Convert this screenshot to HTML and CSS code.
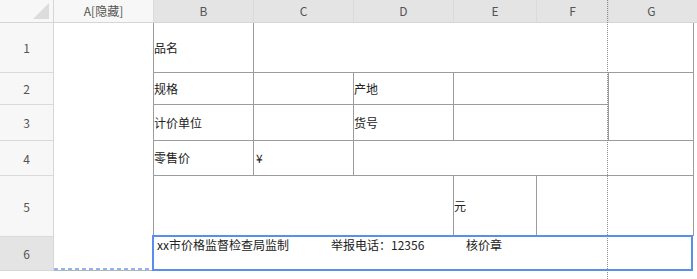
FILE: index.html
```html
<!DOCTYPE html>
<html lang="zh-CN">
<head>
  <meta charset="UTF-8">
  <title>价格标签模板</title>
  <link rel="stylesheet" href="styles.css">
</head>
<body>
  <div class="sheet">
    <!-- column headers -->
    <div class="corner">
      <svg width="16" height="16" viewBox="0 0 16 16"><polygon points="16,0 16,16 0,16" fill="#dcdcdc"/></svg>
    </div>
    <div class="col-head h-a">A[隐藏]</div>
    <div class="col-head sel h-b">B</div>
    <div class="col-head sel h-c">C</div>
    <div class="col-head sel h-d">D</div>
    <div class="col-head sel h-e">E</div>
    <div class="col-head sel h-f">F</div>
    <div class="col-head sel h-g">G</div>
    <div class="col-head sel h-x"></div>

    <!-- row headers -->
    <div class="row-head n1">1</div>
    <div class="row-head n2">2</div>
    <div class="row-head n3">3</div>
    <div class="row-head n4">4</div>
    <div class="row-head n5">5</div>
    <div class="row-head sel n6">6</div>

    <!-- hidden column A -->
    <div class="hidden-col"></div>
    <div class="hidden-col-end"><span class="hidden-mark"></span></div>

    <!-- cells -->
    <div class="cell b1">品名</div>
    <div class="cell c1 edge"></div>

    <div class="cell b2">规格</div>
    <div class="cell c2"></div>
    <div class="cell d2">产地</div>
    <div class="cell e2"></div>
    <div class="cell g2 edge"></div>

    <div class="cell b3">计价单位</div>
    <div class="cell c3"></div>
    <div class="cell d3">货号</div>
    <div class="cell e3"></div>

    <div class="cell b4">零售价</div>
    <div class="cell c4">¥</div>
    <div class="cell d4 edge"></div>

    <div class="cell b5"></div>
    <div class="cell e5">元</div>
    <div class="cell f5 edge"></div>

    <div class="selected b6">
      <span class="note note-maker">xx市价格监督检查局监制</span>
      <span class="note note-phone">举报电话：12356</span>
      <span class="note">核价章</span>
    </div>

    <div class="page-break"></div>
  </div>
</body>
</html>
```

FILE: styles.css
```css
* {
  margin: 0;
  padding: 0;
  box-sizing: border-box;
}
body {
  font-family: "Noto Sans CJK SC", "Noto Sans", sans-serif;
  font-size: 12px;
  color: #222;
  background-color: #fff;
}
.sheet {
  position: relative;
  width: 697px;
  height: 279px;
  overflow: hidden;
  display: grid;
  grid-template-columns: 54px 99px 100px 100px 100px 83px 72px 86px 3px;
  grid-template-rows: 23px 49px 32px 36px 35px 61px 35px 8px;
  grid-template-areas:
    "corner ha hb hc hd he hf hg hx"
    "n1 a b1 c1 c1 c1 c1 c1 ."
    "n2 a b2 c2 d2 e2 e2 g2 ."
    "n3 a b3 c3 d3 e3 e3 g2 ."
    "n4 a b4 c4 d4 d4 d4 d4 ."
    "n5 a b5 b5 b5 e5 f5 f5 ."
    "n6 a6 b6 b6 b6 b6 b6 b6 ."
    ". . . . . . . . .";
}

/* headers */
.corner {
  grid-area: corner;
  background-color: #f7f7f7;
  border-right: 1px solid #d6d6d6;
  border-bottom: 1px solid #d6d6d6;
  display: flex;
  justify-content: flex-end;
  align-items: flex-start;
  padding: 3px 4px 0 0;
}
.col-head {
  background-color: #f7f7f7;
  border-left: 1px solid #dadada;
  border-bottom: 1px solid #d6d6d6;
  color: #555;
  display: flex;
  align-items: center;
  justify-content: center;
  line-height: 16px;
}
.col-head.sel,
.row-head.sel {
  background-color: #e3e4e3;
}
.h-a { grid-area: ha; border-left: none; }
.h-b { grid-area: hb; }
.h-c { grid-area: hc; }
.h-d { grid-area: hd; }
.h-e { grid-area: he; }
.h-f { grid-area: hf; }
.h-g { grid-area: hg; }
.h-x { grid-area: hx; border-left: none; }

.row-head {
  background-color: #f7f7f7;
  border-right: 1px solid #d6d6d6;
  border-top: 1px solid #dadada;
  color: #555;
  display: flex;
  align-items: center;
  justify-content: center;
}
.n1 { grid-area: n1; border-top: none; }
.n2 { grid-area: n2; }
.n3 { grid-area: n3; }
.n4 { grid-area: n4; }
.n5 { grid-area: n5; }
.n6 { grid-area: n6; border-bottom: 1px solid #d6d6d6; }

/* hidden column A */
.hidden-col {
  grid-area: a;
}
.hidden-col-end {
  grid-area: a6;
  display: flex;
  align-items: flex-end;
  border-bottom: 1px solid #b5b5b5;
}
.hidden-mark {
  display: block;
  width: 100%;
  height: 2px;
  background: repeating-linear-gradient(to right, #8fb4f0 0 4px, transparent 4px 7px);
}

/* cells */
.cell {
  border-left: 1px solid #9c9c9c;
  border-top: 1px solid #9c9c9c;
  display: flex;
  align-items: center;
  line-height: 16px;
}
.cell.edge {
  border-right: 1px solid #9c9c9c;
}
.b1 { grid-area: b1; border-top: none; }
.c1 { grid-area: c1; border-top: none; }
.b2 { grid-area: b2; }
.c2 { grid-area: c2; }
.d2 { grid-area: d2; }
.e2 { grid-area: e2; }
.g2 { grid-area: g2; }
.b3 { grid-area: b3; }
.c3 { grid-area: c3; }
.d3 { grid-area: d3; }
.e3 { grid-area: e3; }
.b4 { grid-area: b4; }
.c4 { grid-area: c4; padding-left: 2px; }
.d4 { grid-area: d4; }
.b5 { grid-area: b5; }
.e5 { grid-area: e5; }
.f5 { grid-area: f5; }

.selected {
  grid-area: b6;
  margin: -1px 1px 0 -1px;
  border: 2px solid #5a8eee;
  padding-left: 3px;
  display: flex;
  align-items: flex-start;
  line-height: 16px;
  white-space: nowrap;
}
.note {
  flex: none;
}
.note-maker {
  width: 174px;
}
.note-phone {
  width: 135px;
}

/* page break marker */
.page-break {
  position: absolute;
  left: 607px;
  top: 0;
  height: 279px;
  border-left: 1px dotted #8a8a8a;
  pointer-events: none;
}
```
